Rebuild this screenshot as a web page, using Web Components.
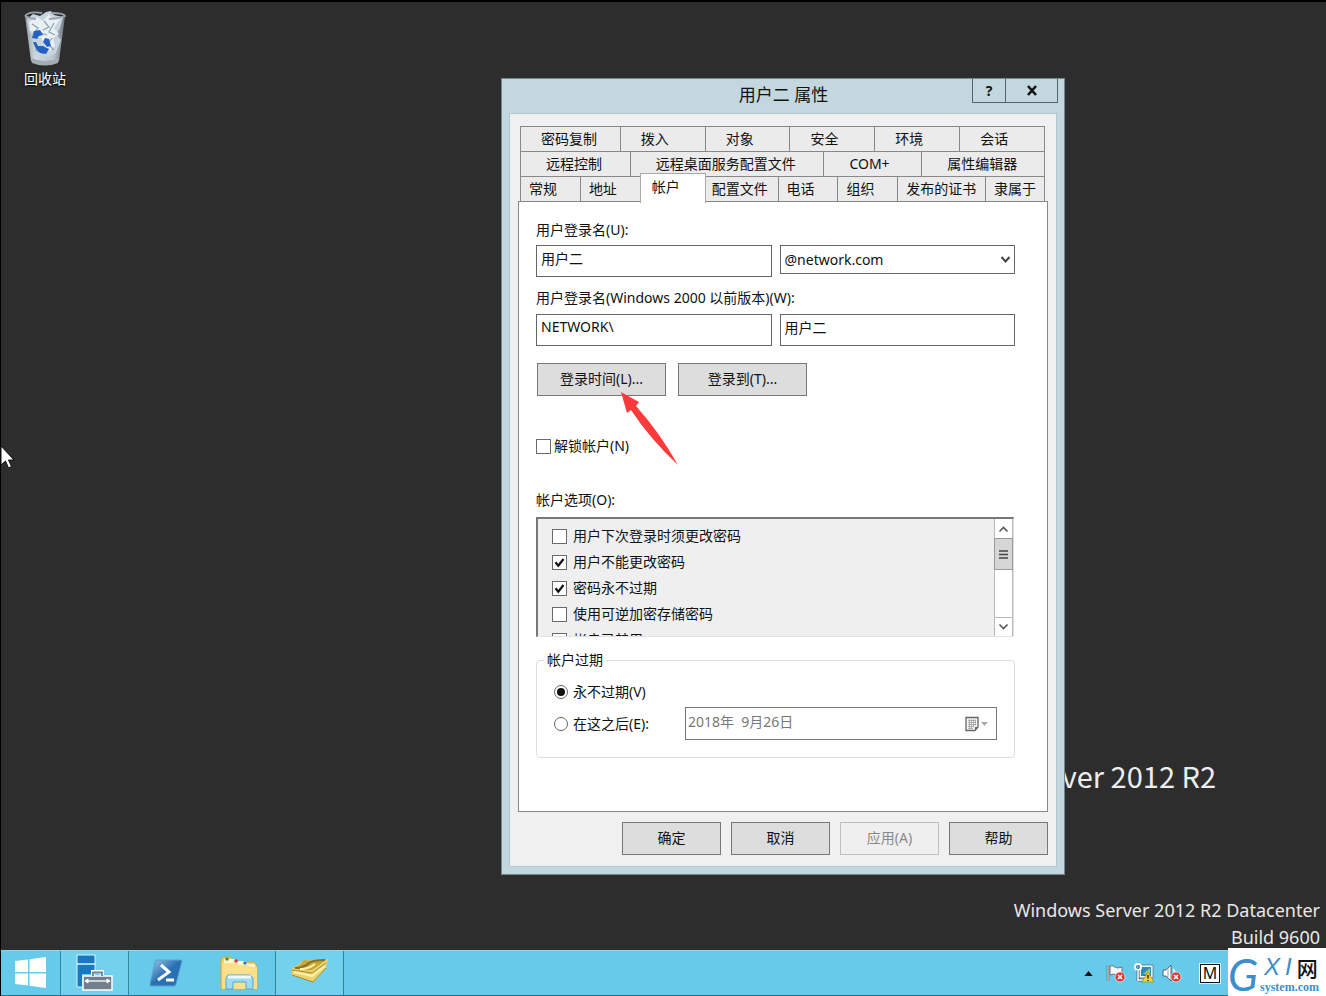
<!DOCTYPE html>
<html lang="zh-CN">
<head>
<meta charset="utf-8">
<title>用户二 属性</title>
<style>
html,body{height:100%}
body{margin:0;background:#000;color:#111;font:14px/20px "Noto Sans","Noto Sans CJK SC",sans-serif}
</style>
</head>
<body>
<desktop-shell>
  <desktop-icon>回收站</desktop-icon>
  <brand-mark slot="brand">Windows Server 2012 R2</brand-mark>
  <build-info slot="brand"><span>Windows Server 2012 R2 Datacenter</span><span>Build 9600</span></build-info>
  <dialog-window slot="window" heading="用户二 属性">
    <tab-panel>
      <account-page></account-page>
    </tab-panel>
    <push-button slot="actions">确定</push-button>
    <push-button slot="actions">取消</push-button>
    <push-button slot="actions" disabled>应用(A)</push-button>
    <push-button slot="actions">帮助</push-button>
  </dialog-window>
  <pointer-marks slot="overlay"></pointer-marks>
  <task-bar slot="taskbar"></task-bar>
  <site-badge slot="overlay"></site-badge>
</desktop-shell>

<script>
const define = (name, html, setup) => {
  const template = document.createElement('template');
  template.innerHTML = '<style>:host,*{box-sizing:border-box}button,input,select{font:inherit;color:inherit;margin:0;border-radius:0}svg{display:block}</style>' + html;
  customElements.define(name, class extends HTMLElement {
    constructor() {
      super();
      this.attachShadow({ mode: 'open' }).append(template.content.cloneNode(true));
    }
    connectedCallback() { if (setup) setup(this, this.shadowRoot); }
  });
};

define('push-button', `
<style>
:host{display:block;width:99px}
button{display:block;width:100%;height:33px;padding:0 0 1px;border:1px solid #777;background:#ddd;color:#111}
button:disabled{background:#efefef;border-color:#bfbfbf;color:#8a8a8a}
</style>
<button type="button"><slot></slot></button>`, (el, root) => {
  root.querySelector('button').disabled = el.hasAttribute('disabled');
});

define('check-option', `
<style>
:host{display:block}
label{display:flex;align-items:center;gap:var(--gap,6px);height:100%;white-space:nowrap}
.box{display:grid;flex:none;width:15px;height:15px}
.box>*{grid-area:1/1}
input{appearance:none;width:15px;height:15px;border:1px solid #6a6a6a;background:#fff}
svg{width:15px;height:15px;visibility:hidden;pointer-events:none}
input:checked+svg{visibility:visible}
</style>
<label><span class="box"><input type="checkbox"><svg viewBox="0 0 15 15"><path d="M3.5 7.2 6.3 10.7 11.5 4" fill="none" stroke="#111" stroke-width="2.2"/></svg></span><slot></slot></label>`, (el, root) => {
  root.querySelector('input').checked = el.hasAttribute('checked');
});

define('option-list', `
<style>
:host{display:flex;height:120px;margin-right:1px;border:solid;border-width:2px 1px 1px 2px;border-color:#777 #ddd #e3e3e3 #777;background:#efefef}
.items{flex:1;min-width:0;overflow:hidden;padding:4px 14px 0}
.bar{display:flex;flex-direction:column;width:19px;background:#fff;border:1px solid #bbb;border-width:0 1px}
button{display:grid;place-items:center;height:19px;padding:0;border:0;background:#fff}
.down{margin-top:auto;border-top:1px solid #bbb;height:19px}
.thumb{display:grid;place-items:center;height:32px;border:1px solid #999;background:#d6d6d6;margin:0 -1px}
::slotted(*){height:26px}
</style>
<div class="items"><slot></slot></div>
<div class="bar">
  <button type="button" aria-label="上移"><svg width="11" height="8" viewBox="0 0 11 8"><path d="M1.5 6.5 5.5 2.5 9.5 6.5" fill="none" stroke="#555" stroke-width="1.6"/></svg></button>
  <div class="thumb"><svg width="9" height="9" viewBox="0 0 9 9"><path d="M0 1h9M0 4.5h9M0 8h9" stroke="#444" stroke-width="1.5"/></svg></div>
  <button type="button" class="down" aria-label="下移"><svg width="11" height="8" viewBox="0 0 11 8"><path d="M1.5 1.5 5.5 5.5 9.5 1.5" fill="none" stroke="#555" stroke-width="1.6"/></svg></button>
</div>`);

define('expiry-group', `
<style>
:host{display:block}
fieldset{margin:0;min-width:0;padding:12px 17px 17px;border:1px solid #ddd;border-radius:4px}
legend{margin-left:-10px;padding:0 3px;height:20px}
.row{display:flex;align-items:center}
.row+.row{margin-top:5px}
label{display:flex;align-items:center;gap:5px;width:131px;white-space:nowrap}
input[type=radio]{appearance:none;display:grid;place-items:center;width:14px;height:14px;border:1px solid #666;border-radius:50%;background:#fff}
input[type=radio]:checked::before{content:"";width:8px;height:8px;border-radius:50%;background:#111}
.date{display:flex;flex:1;height:33px;border:1px solid #777;background:#fff;color:#777}
.date input{flex:1;min-width:0;border:0;padding:0 2px 3px;background:none}
.date button{display:flex;align-items:center;padding:0 7px;border:0;background:none}
</style>
<fieldset>
  <legend>帐户过期</legend>
  <div class="row"><label><input type="radio" name="expiry" checked>永不过期(V)</label></div>
  <div class="row"><label><input type="radio" name="expiry">在这之后(E):</label>
    <div class="date"><input type="text" value="2018年&nbsp; 9月26日" aria-label="过期日期" disabled>
      <button type="button" aria-label="日历" disabled><svg width="24" height="16" viewBox="0 0 24 16"><path d="M1 1.5h12v9.500l-3 3.500H1z" fill="#f4f4f4" stroke="#666" stroke-width="1.300"/><path d="M13 11h-3v3.500z" fill="#666"/><path d="M3 4.500h8M3 6.500h8M3 8.500h8M3 10.500h6M3 12.500h5M4.500 3.500v9M6.500 3.500v9M8.500 3.500v8M10.500 3.500v6" stroke="#999" stroke-width=".7"/><path d="M16 6h7l-3.500 4z" fill="#aaa"/></svg></button></div>
  </div>
</fieldset>`);

define('account-page', `
<style>
:host{display:flex;flex-direction:column;padding:18px 32px 53px 17px}
.caption{height:20px;white-space:nowrap}
.pair{display:grid;grid-template-columns:1fr 1fr;gap:8px;align-items:start;margin:5px 0 11px}
.pair.second{margin:6px 0 17px}
input{width:100%;height:32px;padding:0 4px 7px;border:1px solid #666;background:#fff}
.combo{display:grid;align-items:center}
.combo>*{grid-area:1/1}
select{appearance:none;width:100%;height:29px;padding:0 24px 0 4px;border:1px solid #666;background:#fff}
.combo svg{justify-self:end;margin-right:4px;pointer-events:none}
.buttons{display:flex;gap:12px;margin-left:1px}
.buttons push-button{width:129px}
.unlock{--gap:3px;height:20px;margin:40px 0 34px;align-self:flex-start}
option-list{margin-top:7px}
expiry-group{margin-top:13px}
</style>
<label class="caption" for="logon">用户登录名(U):</label>
<div class="pair"><input id="logon" type="text" value="用户二">
  <div class="combo"><select aria-label="域后缀"><option>@network.com</option></select><svg width="11" height="9" viewBox="0 0 11 9"><path d="M1.500 2 5.500 6.500 9.500 2" fill="none" stroke="#444" stroke-width="2"/></svg></div></div>
<label class="caption" for="legacy">用户登录名(Windows 2000 以前版本)(W):</label>
<div class="pair second"><input type="text" value="NETWORK\\" aria-label="域" readonly><input id="legacy" type="text" value="用户二"></div>
<div class="buttons"><push-button>登录时间(L)...</push-button><push-button>登录到(T)...</push-button></div>
<check-option class="unlock">解锁帐户(N)</check-option>
<div class="caption">帐户选项(O):</div>
<option-list>
  <check-option>用户下次登录时须更改密码</check-option>
  <check-option checked>用户不能更改密码</check-option>
  <check-option checked>密码永不过期</check-option>
  <check-option>使用可逆加密存储密码</check-option>
  <check-option>帐户已禁用</check-option>
</option-list>
<expiry-group></expiry-group>`);

define('tab-panel', `
<style>
:host{display:block}
.rows{padding:0 3px 0 2px}
.row{display:grid;border-left:1px solid #888}
.row button{height:26px;margin-bottom:-1px;padding:0 0 0 var(--inset);text-align:left;white-space:nowrap;border:1px solid #888;border-left:0;background:#ebebeb}
.a{--inset:20px;grid-template-columns:100fr 85fr 85fr 85fr 85fr 85fr}
.b{--inset:25px;grid-template-columns:110fr 194fr 98fr 123fr}
.c{--inset:8px;grid-template-columns:60fr 60fr 65fr 73fr 60fr 60fr 88fr 59fr}
.c .on{--inset:11px;position:relative;z-index:1;height:30px;margin:-3px 0 -2px -1px;border:1px solid #aaa;border-bottom:0;background:#fff;padding-bottom:4px}
.c .tight{--inset:6px}
.page{border:1px solid #888;background:#fff}
</style>
<div class="rows" role="tablist">
  <div class="row a"><button>密码复制</button><button>拨入</button><button>对象</button><button>安全</button><button>环境</button><button>会话</button></div>
  <div class="row b"><button>远程控制</button><button>远程桌面服务配置文件</button><button>COM+</button><button>属性编辑器</button></div>
  <div class="row c"><button>常规</button><button>地址</button><button class="on">帐户</button><button class="tight">配置文件</button><button>电话</button><button>组织</button><button>发布的证书</button><button>隶属于</button></div>
</div>
<div class="page"><slot></slot></div>`, (el, root) => {
  root.querySelectorAll('button').forEach(b => {
    b.type = 'button';
    b.setAttribute('role', 'tab');
    b.setAttribute('aria-selected', b.classList.contains('on'));
  });
});

define('dialog-window', `
<style>
:host{display:block;position:absolute;left:501px;top:78px;width:564px;background:#c3d7de;border:1px solid #71868e;padding:0 7px 7px}
header{display:grid;grid-template-columns:1fr auto 1fr;height:34px;margin-right:-1px}
h1{margin:0;padding-top:4px;font-size:17px;line-height:24px;font-weight:400}
.controls{grid-column:3;justify-self:end;display:flex;height:24px;border:1px solid #53656c;border-top:0}
.controls button{display:grid;place-items:center;width:32px;height:100%;padding:0;border:0;background:none;font-weight:700;line-height:20px}
.controls button+button{width:52px;border-left:1px solid #53656c}
.client{background:#f0f0f0;border:1px solid #b2c6cd;padding:12px 8px 11px 8px}
footer{display:flex;justify-content:flex-end;gap:10px;margin-top:10px}
</style>
<header><span></span><h1></h1><div class="controls"><button type="button">?</button><button type="button" aria-label="关闭"><svg width="12" height="11" viewBox="0 0 12 11"><path d="M2 1 10 10M10 1 2 10" stroke="#111" stroke-width="2.600"/></svg></button></div></header>
<div class="client"><slot></slot><footer><slot name="actions"></slot></footer></div>`, (el, root) => {
  root.querySelector('h1').textContent = el.getAttribute('heading');
});

define('desktop-icon', `
<style>
:host{display:flex;flex-direction:column;align-items:center;width:72px;padding:8px 0 0;margin-left:8px;color:#fff;text-shadow:0 1px 2px #000}
svg{margin-bottom:3px}
</style>
<svg width="46" height="56" viewBox="0 0 46 56">
<defs><linearGradient id="g"><stop stop-color="#8c989f"/><stop offset=".25" stop-color="#cfd9df"/><stop offset=".7" stop-color="#b9c6ce"/><stop offset="1" stop-color="#6d787e"/></linearGradient></defs>
<path d="M3 6 9 51Q23 58 37 51L43 6Q23 12 3 6z" fill="url(#g)"/>
<path d="M5 9 11 4 18 6 24 2 29 1 32 5 41 7 38 18 34 24 39 30 34 43 27 47 13 44 11 28 7 20z" fill="#c5d4dd"/>
<path d="M7 12l8-5 6 4 6-7 5 6 6-1-6 9 5 6-6 4 2 8-7 6-4-7-3-8-8 2 4-7-7-1z" fill="#edf4f7" opacity=".85"/>
<path d="M10 14l6 4-3 4M22 11l5 6-6 3M32 13l-5 9 6 3M30 28l-4 6 6 6M13 40l8 3 6-4M19 23l6 2" fill="none" stroke="#8fa2af" stroke-width="1.200"/>
<path d="M3 6Q7 1 20 3M29 3Q42 3 43 6Q35 9 27 9M3 6Q8 9 14 9" fill="none" stroke="#99a5ab" stroke-width="1.800"/>
<path d="M9 48Q23 54 37 48L36 53Q23 58 10 53z" fill="#a2adb3"/>
<path d="M10 28 12 21 18 20 21 25 17 26 15 29zM23 28 27 29 29 36 25 37 21 32zM11 32 14 32 16 36 21 36 27 39 24 44 18 43 14 39z" fill="#2461c2"/>
</svg><span><slot></slot></span>`);

define('brand-mark', `
<style>
:host{display:block;position:absolute;right:110px;bottom:157px;color:#ededed;font:400 29px/36px "Noto Sans CJK SC",sans-serif;white-space:nowrap}
</style><slot></slot>`);

define('build-info', `
<style>
:host{display:flex;flex-direction:column;align-items:flex-end;position:absolute;right:6px;bottom:-1px;color:#e8e8e8;font-size:18px;line-height:27px;white-space:nowrap}
</style><slot></slot>`);

define('pointer-marks', `
<style>
:host{display:block}
svg{position:absolute;pointer-events:none}
.mouse{left:0;top:444px}
.arrow{left:620px;top:391px}
</style>
<svg class="mouse" width="15" height="27" viewBox="0 0 15 27"><path d="M1 2v19l4.500-4 3 7 3-1.500-3-6.500H14z" fill="#fff" stroke="#111"/></svg>
<svg class="arrow" width="60" height="76" viewBox="0 0 60 76"><path d="M1 1 19 11 16 15Q40 42 58 74Q30 48 11 19L7 22z" fill="#fb3b3b"/></svg>`);

define('task-bar', `
<style>
:host{display:flex;align-items:stretch;height:46px;margin-left:1px;background:#66cbea;border-top:1px solid #8bd7ee;border-bottom:1px solid #2f6d84}
button{display:grid;place-items:center;padding:0;border:0;background:none;width:73px}
.start{width:59px}
.open{width:69px;border:1px solid #36839c;border-width:0 1px;background:#72d1ed}
.tray{display:flex;align-items:center;margin-left:auto;margin-right:106px}
.tray button{width:28px}
.tray .lang{width:20px;height:19px;margin-left:14px;border:1px solid #111;background:#fff;font-size:16px;line-height:17px;outline:1px solid #d7f1f9}
</style>
<button class="start" aria-label="开始"><svg width="32" height="32" viewBox="0 0 32 32"><path d="M0 4 13 2.500V15H0zM14.500 2.300 31 0V15H14.500zM0 16.500H13V28.500L0 27zM14.500 16.500H31V31L14.500 28.700z" fill="#fff"/></svg></button>
<button class="open" aria-label="服务器管理器"><svg width="38" height="40" viewBox="0 0 38 40"><path d="M1 2h18v32H1z" fill="#1878c2" stroke="#dff4fb"/><path d="M1 11h18" stroke="#dff4fb" stroke-width="1.500"/><path d="M6 21h31v17H6z" fill="#69cbea"/><path d="M17 22v-3h9v3" fill="none" stroke="#fff" stroke-width="4"/><path d="M7 23h29v14H7z" fill="#727f8e" stroke="#fff" stroke-width="1.500"/><path d="M17 23v-3.500h9V23" fill="none" stroke="#727f8e" stroke-width="1.800"/><path d="M10 28h23" stroke="#fff" stroke-width="1.300"/><path d="M9 28l3-2v4zM34 28l-3-2v4z" fill="#fff" stroke="#fff"/></svg></button>
<button aria-label="PowerShell"><svg width="34" height="28" viewBox="0 0 34 28"><defs><linearGradient id="p" x2="1" y2="1"><stop stop-color="#9ccbe9"/><stop offset=".5" stop-color="#2b70b3"/><stop offset="1" stop-color="#2b70b3"/></linearGradient></defs><path d="M7 1h25q1 0 1 1l-6 23q0 2-2 2H2q-1 0-1-2L6 3q0-2 2-2z" fill="url(#p)" stroke="#5aa0d0"/><path d="M12 6l8 7-11 8M17 21h8" fill="none" stroke="#fff" stroke-width="3"/></svg></button>
<button aria-label="文件资源管理器"><svg width="38" height="36" viewBox="0 0 38 36"><path d="M1 5 3 2h8l2 3h4l2 2h15l3 4v23H1z" fill="#f3cf68" stroke="#d9a93b"/><path d="M4 4h10l2 2h10l2 3h7v3H4z" fill="#fff6cf"/><path d="M2 8h14l3 2h9l2 2h7v22H2z" fill="#fbe08c"/><circle cx="7" cy="4" r="1.800" fill="#3a9a4a"/><circle cx="16" cy="6" r="1.800" fill="#c74343"/><circle cx="25" cy="8" r="1.800" fill="#327cc1"/><path d="M6 34V23l2-3h22l3 3v11h-7v-7H13v7z" fill="#9edcf4" stroke="#4ba9d2"/><path d="M8 22h23" stroke="#eefaff" stroke-width="3"/></svg></button>
<button class="open" aria-label="用户和计算机"><svg width="38" height="30" viewBox="0 0 38 30"><path d="M1 11 12 3Q24 2 37 1L35 10 23 24 1 17z" fill="#ead371"/><path d="M2 10Q9 8 13 2Q24 4 36 1Q29 7 21 12Q12 13 2 10z" fill="#c9a535"/><path d="M4 10Q13 10 18 5Q22 2 34 2" fill="none" stroke="#8a7024" stroke-width="2"/><path d="M9 11Q18 11 24 6" fill="none" stroke="#fff4ad" stroke-width="2"/><path d="M1 12 21 15 35 5M1 17 22 24 35 10" fill="none" stroke="#aa882a"/><path d="M3 14 21 18 34 8" fill="none" stroke="#fff2ad" stroke-width="2"/></svg></button>
<div class="tray">
<button aria-label="显示隐藏的图标"><svg width="9" height="5" viewBox="0 0 10 6"><path d="M0 6 5 0l5 6z" fill="#111"/></svg></button>
<button aria-label="操作中心"><svg width="20" height="20" viewBox="0 0 20 20"><path d="M2 2v16" stroke="#555" stroke-width="2.500"/><path d="M2 2v16" stroke="#fff"/><path d="M4 3q3-1 5 1t7 0v8q-4 2-6 0T4 12z" fill="#f6f8fa" stroke="#687782"/><circle cx="14" cy="14" r="5" fill="#d63a32" stroke="#fff" stroke-width=".6"/><path d="M12 12l4 4M16 12l-4 4" stroke="#fff" stroke-width="1.700"/></svg></button>
<button aria-label="网络"><svg width="20" height="20" viewBox="0 0 20 20"><path d="M6 3h12v11H6z" fill="#2a8bbd" stroke="#eefaff" stroke-width="2"/><path d="M5 2h14v13H5z" fill="none" stroke="#4e6572" stroke-width=".7"/><path d="M9 11l7-6v6z" fill="#9acb65"/><circle cx="4" cy="4" r="3" fill="none" stroke="#fff" stroke-width="2"/><circle cx="4" cy="4" r="1.600" fill="none" stroke="#455c69" stroke-width=".7"/><path d="M4 7v11M4 17h5" stroke="#455c69" stroke-width="2.800"/><path d="M4 7v11M4 17h5" stroke="#fff" stroke-width="1.500"/><path d="M14 9l6 10H8z" fill="#ffd32c" stroke="#a17c00" stroke-width=".6"/><path d="M14 12v3.500M14 17v1" stroke="#222" stroke-width="1.500"/></svg></button>
<button aria-label="音量"><svg width="20" height="20" viewBox="0 0 20 20"><path d="M1 7h3l5-5v16l-5-5H1z" fill="#fff" stroke="#526572"/><path d="M6 5v9" stroke="#8fa2ad"/><path d="M11 6q3 3 0 7" fill="none" stroke="#fff" stroke-width="1.500"/><circle cx="14" cy="14" r="5" fill="#d63a32" stroke="#fff" stroke-width=".6"/><path d="M12 12l4 4M16 12l-4 4" stroke="#fff" stroke-width="1.700"/></svg></button>
<button class="lang">M</button>
</div>`, (el, root) => root.querySelectorAll('button').forEach(b => { b.type = 'button'; }));

define('site-badge', `
<style>
:host{display:grid;grid-template-columns:31px 1fr;grid-template-rows:32px 16px;position:absolute;right:0;bottom:0;width:98px;height:48px;background:#fff;color:#3d8fcb;white-space:nowrap}
.g{grid-row:1/3;font:italic 44px/52px Lato,sans-serif}
.top{display:flex;align-items:flex-end;gap:5px;padding-left:5px;font:italic 24px/26px "Liberation Sans",sans-serif}
.top b{margin-left:auto;padding-right:9px;color:#111;font:500 21px/26px "Noto Sans CJK SC",sans-serif}
.bottom{padding-left:1px;font:700 12px/14px "Liberation Serif",serif}
</style>
<span class="g">G</span><span class="top"><span>X</span><span>I</span><b>网</b></span><span class="bottom">system.com</span>`);

define('desktop-shell', `
<style>
:host{display:flex;flex-direction:column;position:relative;min-height:100vh;background:#000;overflow:hidden}
main{flex:1;position:relative;border-top:2px solid #000;border-left:1px solid #000;background:#2e2d2e}
</style>
<main><slot></slot><slot name="brand"></slot></main>
<slot name="window"></slot>
<slot name="taskbar"></slot>
<slot name="overlay"></slot>`);
</script>
</body>
</html>
